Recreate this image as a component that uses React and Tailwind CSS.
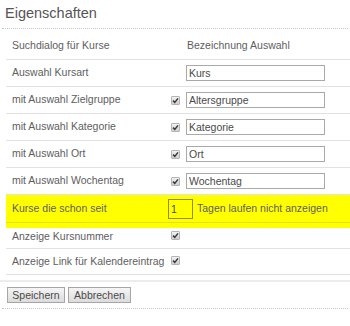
import React from "react";

const Check = () => (
  <span className="w-[9px] h-[9px] shrink-0 border border-[#b5b5b5] rounded-[1px] bg-gradient-to-b from-[#f2f2f2] to-[#cfcfcf] flex items-center justify-center">
    <svg width="7" height="7" viewBox="0 0 7 7">
      <path d="M1 3.6 L2.8 5.4 L6 1.4" fill="none" stroke="#3a3a3a" strokeWidth="1.5" />
    </svg>
  </span>
);

const rows = [
  { label: "Auswahl Kursart", check: false, value: "Kurs" },
  { label: "mit Auswahl Zielgruppe", check: true, value: "Altersgruppe" },
  { label: "mit Auswahl Kategorie", check: true, value: "Kategorie" },
  { label: "mit Auswahl Ort", check: true, value: "Ort" },
  { label: "mit Auswahl Wochentag", check: true, value: "Wochentag" },
];

const App = () => {
  return (
    <div className="w-[350px] h-[326px] bg-white text-[#5e5e5e] text-[10.5px] overflow-hidden font-['Liberation_Sans',Arial,sans-serif]">
      {/* Title */}
      <div className="mx-[2px] h-[29px] pl-[3px] pt-[3px] border-b border-dotted border-[#c8c8c8] text-[14.5px] leading-[20px] text-[#555]">
        Eigenschaften
      </div>

      {/* Table */}
      <div className="ml-[6px]">
        <div className="h-[31px] pt-[3px] flex items-center border-b border-[#e2e2e2]">
          <div className="w-[181px] pl-[6px]">Suchdialog für Kurse</div>
          <div>Bezeichnung Auswahl</div>
        </div>

        {rows.map((r) => (
          <div key={r.label} className="h-[27px] flex items-center border-b border-[#e2e2e2]">
            <div className="w-[165px] pl-[6px]">{r.label}</div>
            <div className="w-[15px]">{r.check && <Check />}</div>
            <input
              readOnly
              value={r.value}
              className="w-[139px] h-[16px] border border-[#a9a9a9] bg-white px-[2px] text-[10.5px] text-[#4a4a4a] outline-none"
            />
          </div>
        ))}

        <div className="bg-[#ffff00] pb-[5px]">
          <div className="h-[28px] flex items-center border-b border-[#e4e400]">
            <div className="w-[162px] pl-[6px]">Kurse die schon seit</div>
            <input
              readOnly
              value="1"
              className="w-[25px] h-[20px] border border-[#8c8c2a] bg-[#ffff00] px-[2px] text-[10.5px] text-[#4a4a4a] outline-none"
            />
            <span className="ml-[4px]">Tagen laufen nicht anzeigen</span>
          </div>
        </div>

        <div className="h-[21px] flex items-center border-b border-[#e2e2e2]">
          <div className="w-[165px] pl-[6px] pb-[2px]">Anzeige Kursnummer</div>
          <div className="-mt-[5px]"><Check /></div>
        </div>

        <div className="h-[26px] flex items-center border-b border-[#e2e2e2]">
          <div className="w-[165px] pl-[6px] whitespace-nowrap">Anzeige Link für Kalendereintrag</div>
          <div className="-mt-[2px]"><Check /></div>
        </div>
      </div>

      <div className="mt-[5px] h-[2px] bg-[#ececec]" />

      {/* Buttons */}
      <div className="mx-[2px] pl-[5px] pt-[5px] pb-[5px] flex gap-[3px] border-b border-dotted border-[#c8c8c8]">
        <button className="h-[16px] w-[58px] border border-[#a6a6a6] bg-gradient-to-b from-[#f5f5f5] to-[#dcdcdc] text-[10.5px] text-[#4a4a4a] leading-none">
          Speichern
        </button>
        <button className="h-[16px] w-[63px] border border-[#a6a6a6] bg-gradient-to-b from-[#f5f5f5] to-[#dcdcdc] text-[10.5px] text-[#4a4a4a] leading-none">
          Abbrechen
        </button>
      </div>
    </div>
  );
};

export default App;
